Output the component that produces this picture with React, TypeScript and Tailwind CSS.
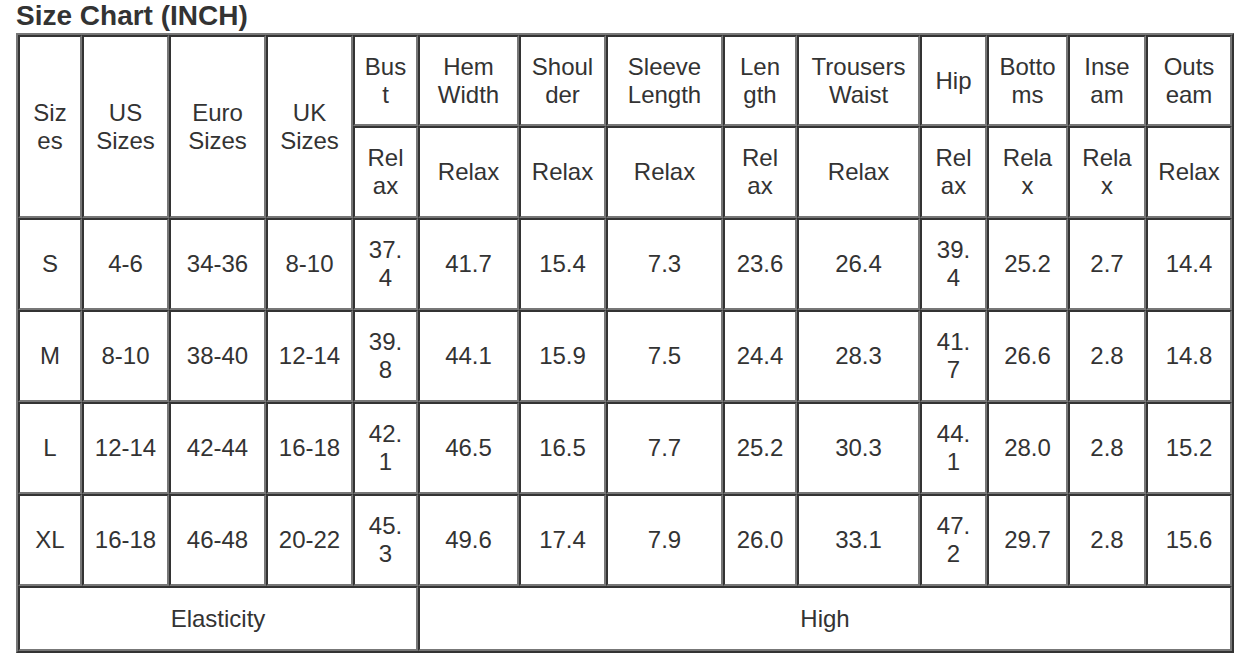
import React from "react";

type Cell = string | string[];

const cellCls =
  "border-2 border-t-[#333333] border-l-[#333333] border-b-[#777777] border-r-[#777777] p-0 text-center align-middle whitespace-nowrap";

function Txt({ v }: { v: Cell }) {
  if (Array.isArray(v)) {
    return (
      <>
        {v.map((s, i) => (
          <React.Fragment key={i}>
            {i > 0 && <br />}
            {s}
          </React.Fragment>
        ))}
      </>
    );
  }
  return <>{v}</>;
}

const rows: Cell[][] = [
  ["S", "4-6", "34-36", "8-10", ["37.", "4"], "41.7", "15.4", "7.3", "23.6", "26.4", ["39.", "4"], "25.2", "2.7", "14.4"],
  ["M", "8-10", "38-40", "12-14", ["39.", "8"], "44.1", "15.9", "7.5", "24.4", "28.3", ["41.", "7"], "26.6", "2.8", "14.8"],
  ["L", "12-14", "42-44", "16-18", ["42.", "1"], "46.5", "16.5", "7.7", "25.2", "30.3", ["44.", "1"], "28.0", "2.8", "15.2"],
  ["XL", "16-18", "46-48", "20-22", ["45.", "3"], "49.6", "17.4", "7.9", "26.0", "33.1", ["47.", "2"], "29.7", "2.8", "15.6"],
];

const widths = [64, 87, 97, 87, 65, 101, 87, 117, 74, 123, 67, 81, 78, 86];

const head1: Cell[] = [["Bus", "t"], ["Hem", "Width"], ["Shoul", "der"], ["Sleeve", "Length"], ["Len", "gth"], ["Trousers", "Waist"], "Hip", ["Botto", "ms"], ["Inse", "am"], ["Outs", "eam"]];
const head2: Cell[] = [["Rel", "ax"], "Relax", "Relax", "Relax", ["Rel", "ax"], "Relax", ["Rel", "ax"], ["Rela", "x"], ["Rela", "x"], "Relax"];

export default function App() {
  return (
    <div
      className="bg-white min-h-[667px] pl-4 text-[#333333]"
      style={{ fontFamily: '"Liberation Sans", Arial, sans-serif' }}
    >
      <h1 className="text-[28px] font-bold leading-[32px] text-[#333333]">Size Chart (INCH)</h1>
      <table className="mt-[1px] w-[1218px] table-fixed border-separate border-spacing-0 border-2 border-t-[#777777] border-l-[#777777] border-b-[#333333] border-r-[#333333] text-[24px] leading-[28px] text-[#333333]">
        <colgroup>
          {widths.map((w, i) => (
            <col key={i} style={{ width: w }} />
          ))}
        </colgroup>
        <tbody>
          <tr className="h-[91px]">
            <td rowSpan={2} className={cellCls}><Txt v={["Siz", "es"]} /></td>
            <td rowSpan={2} className={cellCls}><Txt v={["US", "Sizes"]} /></td>
            <td rowSpan={2} className={cellCls}><Txt v={["Euro", "Sizes"]} /></td>
            <td rowSpan={2} className={cellCls}><Txt v={["UK", "Sizes"]} /></td>
            {head1.map((h, i) => (
              <td key={i} className={cellCls}><Txt v={h} /></td>
            ))}
          </tr>
          <tr className="h-[92px]">
            {head2.map((h, i) => (
              <td key={i} className={cellCls}><Txt v={h} /></td>
            ))}
          </tr>
          {rows.map((r, ri) => (
            <tr key={ri} className="h-[92px]">
              {r.map((c, ci) => (
                <td key={ci} className={cellCls}><Txt v={c} /></td>
              ))}
            </tr>
          ))}
          <tr className="h-[65px]">
            <td colSpan={5} className={cellCls}>Elasticity</td>
            <td colSpan={9} className={cellCls}>High</td>
          </tr>
        </tbody>
      </table>
    </div>
  );
}
